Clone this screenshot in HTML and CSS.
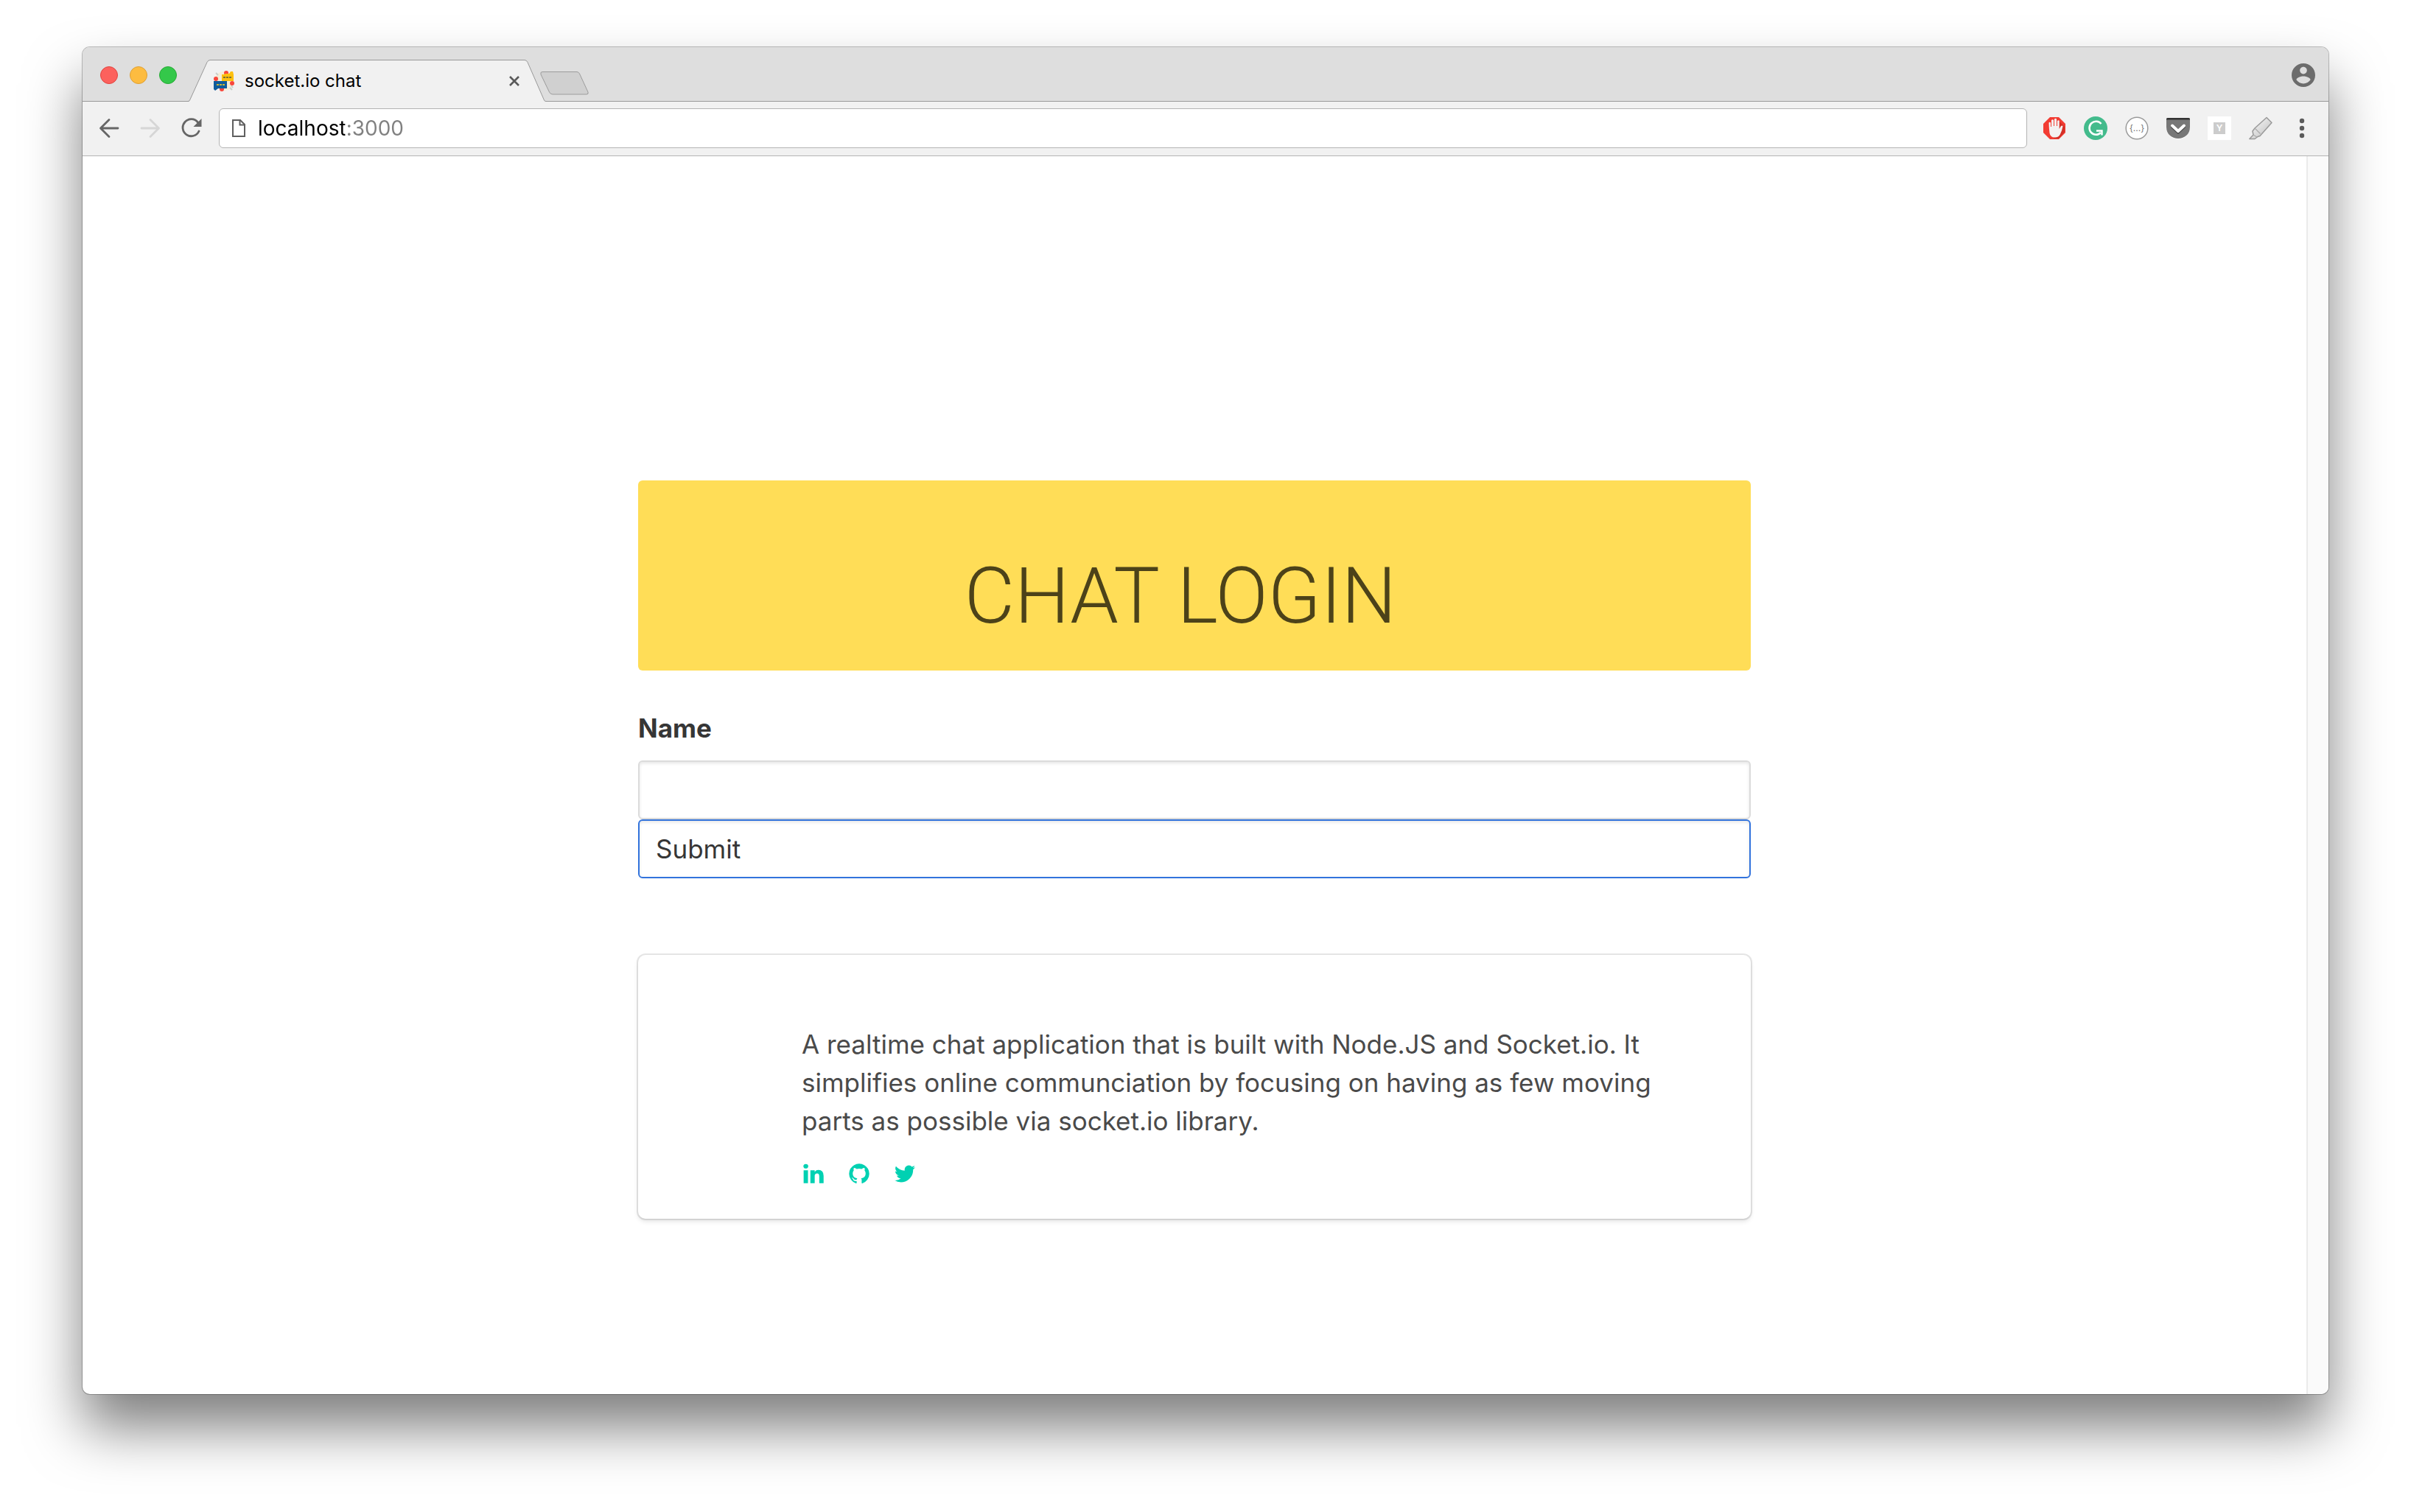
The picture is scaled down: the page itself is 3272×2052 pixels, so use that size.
FILE: index.html
```
<!DOCTYPE html>
<html lang="en">
<head>
  <meta charset="utf-8">
  <meta name="viewport" content="width=device-width, initial-scale=1">
  <title>socket.io chat</title>
  <link rel="stylesheet" href="styles.css">
</head>
<body>
  <div class="window">
    <div class="tab-strip">
      <div class="lights">
        <button class="light light-close" type="button" aria-label="Close window"></button>
        <button class="light light-minimize" type="button" aria-label="Minimize window"></button>
        <button class="light light-zoom" type="button" aria-label="Zoom window"></button>
      </div>
      <div class="tab">
        <svg class="tab-shape" viewBox="0 0 486 57" aria-hidden="true">
          <path d="M0 57C1.500 57 2 56 2.500 55L26 3.500Q27.500 .5 30 .5H457Q459.500 .5 461 3.500L483.500 55Q484 56.500 486 56.500V57Z" fill="#f1f1f1"/>
          <path d="M0 56.500Q1.800 56.500 2.500 55L26 3.500Q27.500 .5 30 .5H457Q459.500 .5 461 3.500L483.500 55Q484.200 56.500 486 56.500" fill="none" stroke="#999"/>
        </svg>
        <div class="tab-content">
          <svg class="favicon" viewBox="0 0 28 28" aria-hidden="true">
            <circle cx="14" cy="14" r="13" fill="#f6ecd6"/>
            <path d="M3 3l3 3M22 23l3 3M24 20l2 3" stroke="#c9cfc9" stroke-width="2"/>
            <circle cx="17" cy="3" r="3" fill="#f8473c"/>
            <circle cx="3" cy="11" r="3" fill="#f8473c"/>
            <circle cx="25" cy="17" r="3" fill="#f8473c"/>
            <circle cx="11" cy="25" r="3" fill="#f8473c"/>
            <path d="M11 5h3l2-1h5l2-3h3l1 4v9H11z" fill="#fdc00f"/>
            <path d="M13 9h11" stroke="#7b7130" stroke-width="2" stroke-dasharray="3 1"/>
            <path d="M0 14h18v10H6l-4 3-2-2z" fill="#0f5c9c"/>
            <path d="M4 19h11" stroke="#c9b437" stroke-width="2" stroke-dasharray="3 1"/>
          </svg>
          <span class="tab-title">socket.io chat</span>
          <button class="tab-close" type="button" aria-label="Close tab">
            <svg viewBox="0 0 16 16"><path d="M2 2l12 12M14 2L2 14" stroke="#5a5a5a" stroke-width="2.600" fill="none"/></svg>
          </button>
        </div>
      </div>
      <button class="new-tab" type="button" aria-label="New tab">
        <svg viewBox="0 0 66 32"><path d="M3 .5H50Q52 .5 53.500 3L65 28Q66 31 63 31H17Q14 31 12.500 28L1 4Q0 .5 3 .5Z" fill="#d0d0d0" stroke="#9c9c9c"/></svg>
      </button>
      <button class="profile" type="button" aria-label="Profile">
        <svg viewBox="2 2 20 20"><path fill="#6c6c6c" d="M12 2C6.480 2 2 6.480 2 12s4.480 10 10 10 10-4.480 10-10S17.520 2 12 2zm0 3c1.660 0 3 1.340 3 3s-1.340 3-3 3-3-1.340-3-3 1.340-3 3-3zm0 14.200c-2.500 0-4.710-1.280-6-3.220.03-1.990 4-3.080 6-3.080 1.990 0 5.970 1.090 6 3.080-1.290 1.940-3.500 3.220-6 3.220z"/></svg>
      </button>
    </div>

    <div class="toolbar">
      <button class="tool" type="button" aria-label="Back">
        <svg viewBox="0 0 32 32" fill="none" stroke="#666" stroke-width="2.800" stroke-linecap="round" stroke-linejoin="round"><path d="M28 16H5M16 4.500L4.500 16 16 27.500"/></svg>
      </button>
      <button class="tool" type="button" aria-label="Forward" disabled>
        <svg viewBox="0 0 32 32" fill="none" stroke="#d6d6d6" stroke-width="2.800" stroke-linecap="round" stroke-linejoin="round"><path d="M4 16h23M16 4.500L27.500 16 16 27.500"/></svg>
      </button>
      <button class="tool" type="button" aria-label="Reload">
        <svg viewBox="0 0 32 32"><path d="M26 20A11.500 11.500 0 1 1 24.500 8" fill="none" stroke="#666" stroke-width="2.800" stroke-linecap="round"/><path d="M29.500 3v11h-11z" fill="#666"/></svg>
      </button>
      <div class="omnibox">
        <svg class="page-icon" viewBox="0 0 18 26" fill="none" stroke="#5f5f5f" stroke-width="2" aria-hidden="true"><path d="M1 2H11L17 8V24H1Z"/><path d="M10.500 2V8.500H17"/></svg>
        <input class="url" type="text" value="localhost:3000" aria-label="Address" spellcheck="false">
      </div>
      <button class="tool" type="button" aria-label="Ad blocker">
        <svg viewBox="0 0 32 32"><path d="M10 1h12l9 9v12l-9 9H10l-9-9V10z" fill="#f23c33"/><path d="M22 6l8 8v7l-8 9h-7z" fill="#b32119" opacity=".5"/><path d="M8.500 8.500q1.500-1.500 2.500 0V14h1V5q1.500-1.700 3 0v8h1V3.500q1.600-1.700 3 0V13h1V6q1.500-1.700 2.700 0V17l2-3.500q1.500-1.500 2.800-.5-1 6-3.500 11-2 4.500-7.500 4.500-6 0-7-6-.8-6-1-14z" fill="#f4f2f2"/></svg>
      </button>
      <button class="tool" type="button" aria-label="Grammar checker">
        <svg viewBox="0 0 32 32"><circle cx="16" cy="16" r="16" fill="#43bb8c"/><path d="M23.500 10A9 9 0 1 0 23 22" fill="none" stroke="#fff" stroke-width="2.600"/><path d="M17 19.500h7.500v6" fill="none" stroke="#fff" stroke-width="2.400"/></svg>
      </button>
      <button class="tool" type="button" aria-label="JSON viewer">
        <svg viewBox="0 0 32 32"><circle cx="16" cy="16" r="14.800" fill="#fff" stroke="#9a9a9a" stroke-width="1.500"/><text class="glyph-json" x="16" y="20" text-anchor="middle">{...}</text></svg>
      </button>
      <button class="tool" type="button" aria-label="Save for later">
        <svg viewBox="0 0 32 32"><path d="M0 16a16 15 0 0 0 32 0z" fill="#fff"/><path d="M2 2h28q2 0 2 2v10q0 8-5 12-5 4-11 4t-11-4q-5-4-5-12V4q0-2 2-2z" fill="#777"/><path d="M0 4.500V4q0-2 2-2h28q2 0 2 2v.5z" fill="#333"/><path d="M8 14l8 7.500L24 14" fill="none" stroke="#444" stroke-width="4" stroke-linecap="round" stroke-linejoin="round"/><path d="M8 12.500l8 7.500 8-7.500" fill="none" stroke="#fff" stroke-width="4" stroke-linecap="round" stroke-linejoin="round"/></svg>
      </button>
      <button class="tool" type="button" aria-label="News reader">
        <svg viewBox="0 0 32 32"><path d="M0 0h32v32H0z" fill="#fff"/><path d="M8 8h16v16H8z" fill="#ccc"/><text class="glyph-y" x="16" y="20" text-anchor="middle">Y</text></svg>
      </button>
      <button class="tool" type="button" aria-label="Highlighter">
        <svg viewBox="0 0 32 32"><defs><linearGradient id="pen" x1="0" y1="0" x2="1" y2="1"><stop offset="0" stop-color="#fff"/><stop offset="1" stop-color="#bbb"/></linearGradient></defs><path d="M24 1.500L31 8.500 15 26.500 12 27.500 8 30.500H.8L6 25 5 20 8 16z" fill="url(#pen)" stroke="#9a9a9a" stroke-width="1.500" stroke-linejoin="round"/><path d="M8 16l7.500 7.500M6 25l5 3" stroke="#aaa" stroke-width="1.200" fill="none"/></svg>
      </button>
      <button class="tool" type="button" aria-label="Menu">
        <svg viewBox="0 0 32 32" fill="#5a5a5a"><circle cx="16" cy="6" r="3.200"/><circle cx="16" cy="16" r="3.200"/><circle cx="16" cy="26" r="3.200"/></svg>
      </button>
    </div>

    <div class="viewport">
      <main class="page">
        <div class="column">
          <header class="banner">
            <h1 class="banner-title">CHAT LOGIN</h1>
          </header>
          <form class="login">
            <label class="label" for="name">Name</label>
            <input class="input" id="name" name="name" type="text">
            <input class="input submit" type="submit" value="Submit">
          </form>
          <footer class="about">
            <p class="about-text">A realtime chat application that is built with Node.JS and Socket.io. It simplifies online communciation by focusing on having as few moving parts as possible via socket.io library.</p>
            <nav class="social">
              <a href="#linkedin" aria-label="LinkedIn"><svg viewBox="0 0 1792 1792"><path d="M477 625v991h-330v-991h330zm21-306q1 73-50.500 122t-135.500 49h-2q-82 0-132-49t-50-122q0-74 51.500-122.500t134.500-48.500 133 48.500 51 122.500zm1166 729v568h-329v-530q0-105-40.500-164.500t-126.500-59.500q-63 0-105.500 34.500t-63.500 85.500q-11 30-11 81v553h-329q2-399 2-647t-1-296l-1-48h329v144h-2q20-32 41-56t56.500-52 87-43.500 114.500-15.500q171 0 275 113.500t104 332.500z"/></svg></a>
              <a href="#github" aria-label="GitHub"><svg viewBox="0 0 1792 1792"><path d="M896 128q209 0 385.500 103t279.500 279.500 103 385.500q0 251-146.500 451.500t-378.500 277.500q-27 5-40-7t-13-30q0-3 .5-76.500t.5-134.500q0-97-52-142 57-6 102.500-18t94-39 81-66.500 53-105 20.500-150.500q0-119-79-206 37-91-8-204-28-9-81 11t-92 44l-38 24q-93-26-192-26t-192 26q-16-11-42.500-27t-83.500-38.500-85-13.500q-45 113-8 204-79 87-79 206 0 85 20.500 150t52.500 105 80.500 67 94 39 102.500 18q-39 36-49 103-21 10-45 15t-57 5-65.500-21.500-55.500-62.500q-19-32-48.500-52t-49.500-24l-20-3q-21 0-29 4.500t-5 11.500 9 14 13 12l7 5q22 10 43.500 38t31.500 51l10 23q13 38 44 61.500t67 30 69.500 7 55.500-3.500l23-4q0 38 .5 88.500t.5 54.500q0 18-13 30t-40 7q-232-77-378.500-277.500t-146.500-451.500q0-209 103-385.500t279.500-279.500 385.500-103z"/></svg></a>
              <a href="#twitter" aria-label="Twitter"><svg viewBox="0 0 1792 1792"><path d="M1684 408q-67 98-162 167 1 14 1 42 0 130-38 259.500t-115.500 248.500-184.500 210.500-258 146-323 54.500q-271 0-496-145 35 4 78 4 225 0 401-138-105-2-188-64.500t-114-159.500q33 5 61 5 43 0 85-11-112-23-185.500-111.500t-73.500-205.500v-4q68 38 146 41-66-44-105-115t-39-154q0-88 44-163 121 149 294.500 238.500t371.500 99.500q-8-38-8-74 0-134 94.500-228.500t228.500-94.500q140 0 236 102 109-21 205-78-37 115-142 178 93-10 186-50z"/></svg></a>
            </nav>
          </footer>
        </div>
      </main>
      <div class="scroll-track"></div>
    </div>
  </div>
</body>
</html>
```
FILE: styles.css
```
* {
  box-sizing: border-box;
}

body {
  margin: 0;
  padding: 64px 112px 160px;
  background: #fff;
  font-family: Inter, "Liberation Sans", sans-serif;
}

button {
  display: flex;
  align-items: center;
  justify-content: center;
  padding: 0;
  border: 0;
  background: none;
}

svg {
  display: block;
  overflow: visible;
}

/* Browser window */
.window {
  display: flex;
  flex-direction: column;
  min-height: calc(100vh - 224px);
  border-radius: 10px;
  background: #fff;
  box-shadow: 0 0 0 1px rgba(0, 0, 0, 0.25), 0 46px 76px rgba(0, 0, 0, 0.5);
}

/* Tab strip */
.tab-strip {
  display: flex;
  align-items: flex-end;
  height: 74px;
  padding: 0 18px 0 24px;
  border-radius: 10px 10px 0 0;
  background: linear-gradient(#999, #999) bottom / 100% 1px no-repeat #dedede;
}

.lights {
  display: flex;
  gap: 16px;
  width: 119px;
  padding-bottom: 24px;
}

.light {
  width: 24px;
  height: 24px;
  border: 1px solid;
  border-radius: 50%;
}

.light-close {
  background: #fc615d;
  border-color: #e0443f;
}

.light-minimize {
  background: #fdbc40;
  border-color: #dea034;
}

.light-zoom {
  background: #34c84a;
  border-color: #27aa35;
}

.tab {
  display: grid;
  width: 486px;
  height: 57px;
}

.tab-shape,
.tab-content {
  grid-area: 1 / 1;
}

.tab-shape {
  width: 486px;
  height: 57px;
}

.tab-content {
  display: flex;
  align-items: center;
  padding: 0 35px;
}

.favicon {
  width: 28px;
  height: 28px;
}

.tab-title {
  flex: 1;
  padding-left: 14px;
  font-size: 24px;
  line-height: 32px;
  color: #000;
}

.tab-close svg {
  width: 16px;
  height: 16px;
}

.new-tab {
  margin: 0 auto 9px -8px;
}

.new-tab svg {
  width: 66px;
  height: 32px;
}

.profile {
  padding-bottom: 20px;
}

.profile svg {
  width: 32px;
  height: 32px;
}

/* Toolbar */
.toolbar {
  display: flex;
  align-items: center;
  height: 74px;
  padding: 0 8px 1px;
  border-bottom: 1px solid #b4b4b4;
  background: #f1f1f1;
}

.tool {
  width: 56px;
  height: 56px;
}

.tool svg {
  width: 32px;
  height: 32px;
}

.glyph-json {
  font: 12px Inter, sans-serif;
  fill: #777;
}

.glyph-y {
  font: 600 12px Inter, sans-serif;
  fill: #fff;
}

.omnibox {
  display: flex;
  flex: 1;
  align-items: center;
  height: 54px;
  margin: 0 9px;
  padding-left: 17px;
  border: 1px solid #b4b4b4;
  border-radius: 6px;
  background: #fff;
}

.page-icon {
  width: 18px;
  height: 26px;
}

/* The host is black and the port grey, split by the gradient */
.url {
  flex: 1;
  margin: 0 17px;
  padding: 0;
  border: 0;
  outline: 0;
  font: 28px/36px Inter, "Liberation Sans", sans-serif;
  color: transparent;
  background: linear-gradient(to right, #000 118px, #808080 118px);
  -webkit-background-clip: text;
  background-clip: text;
}

/* Page */
.viewport {
  display: flex;
  flex: 1;
}

.page {
  display: flex;
  flex: 1;
  justify-content: center;
  align-items: flex-start;
  padding: 440px 0 120px;
}

.scroll-track {
  width: 30px;
  border-left: 2px solid #ebebeb;
  border-radius: 0 0 10px 0;
  background: #fafafa;
}

.column {
  width: calc(50% + 1px);
}

.banner {
  padding: 106px 38px 48px 0;
  border-radius: 6px;
  background: #ffdd57;
  text-align: center;
}

.banner-title {
  margin: 0;
  font: 300 105px/104px Roboto, "Liberation Sans", sans-serif;
  color: #4c4219;
}

.login {
  display: flex;
  flex-direction: column;
  margin: 52px 0 104px;
}

.label {
  margin-bottom: 18px;
  font-size: 35px;
  font-weight: 700;
  line-height: 52px;
  color: #363636;
}

.input {
  height: 80px;
  padding: 0 22px;
  border: 2px solid #dbdbdb;
  border-radius: 6px;
  outline: 0;
  background: #fff;
  box-shadow: inset 0 2px 4px rgba(10, 10, 10, 0.1);
  font: 35px/52px Inter, "Liberation Sans", sans-serif;
  color: #363636;
}

.submit {
  border-color: #3273dc;
  text-align: left;
}

.about {
  padding: 95px 110px 45px 222px;
  border-radius: 10px;
  background: #fff;
  box-shadow: 0 4px 6px rgba(10, 10, 10, 0.1), 0 0 0 2px rgba(10, 10, 10, 0.1);
}

.about-text {
  margin: 0;
  font-size: 35px;
  line-height: 52px;
  color: #4a4a4a;
}

.social {
  display: flex;
  gap: 30px;
  padding-top: 30px;
}

.social a {
  color: #00d1b2;
}

.social svg {
  width: 32px;
  height: 32px;
  fill: currentColor;
}
```
